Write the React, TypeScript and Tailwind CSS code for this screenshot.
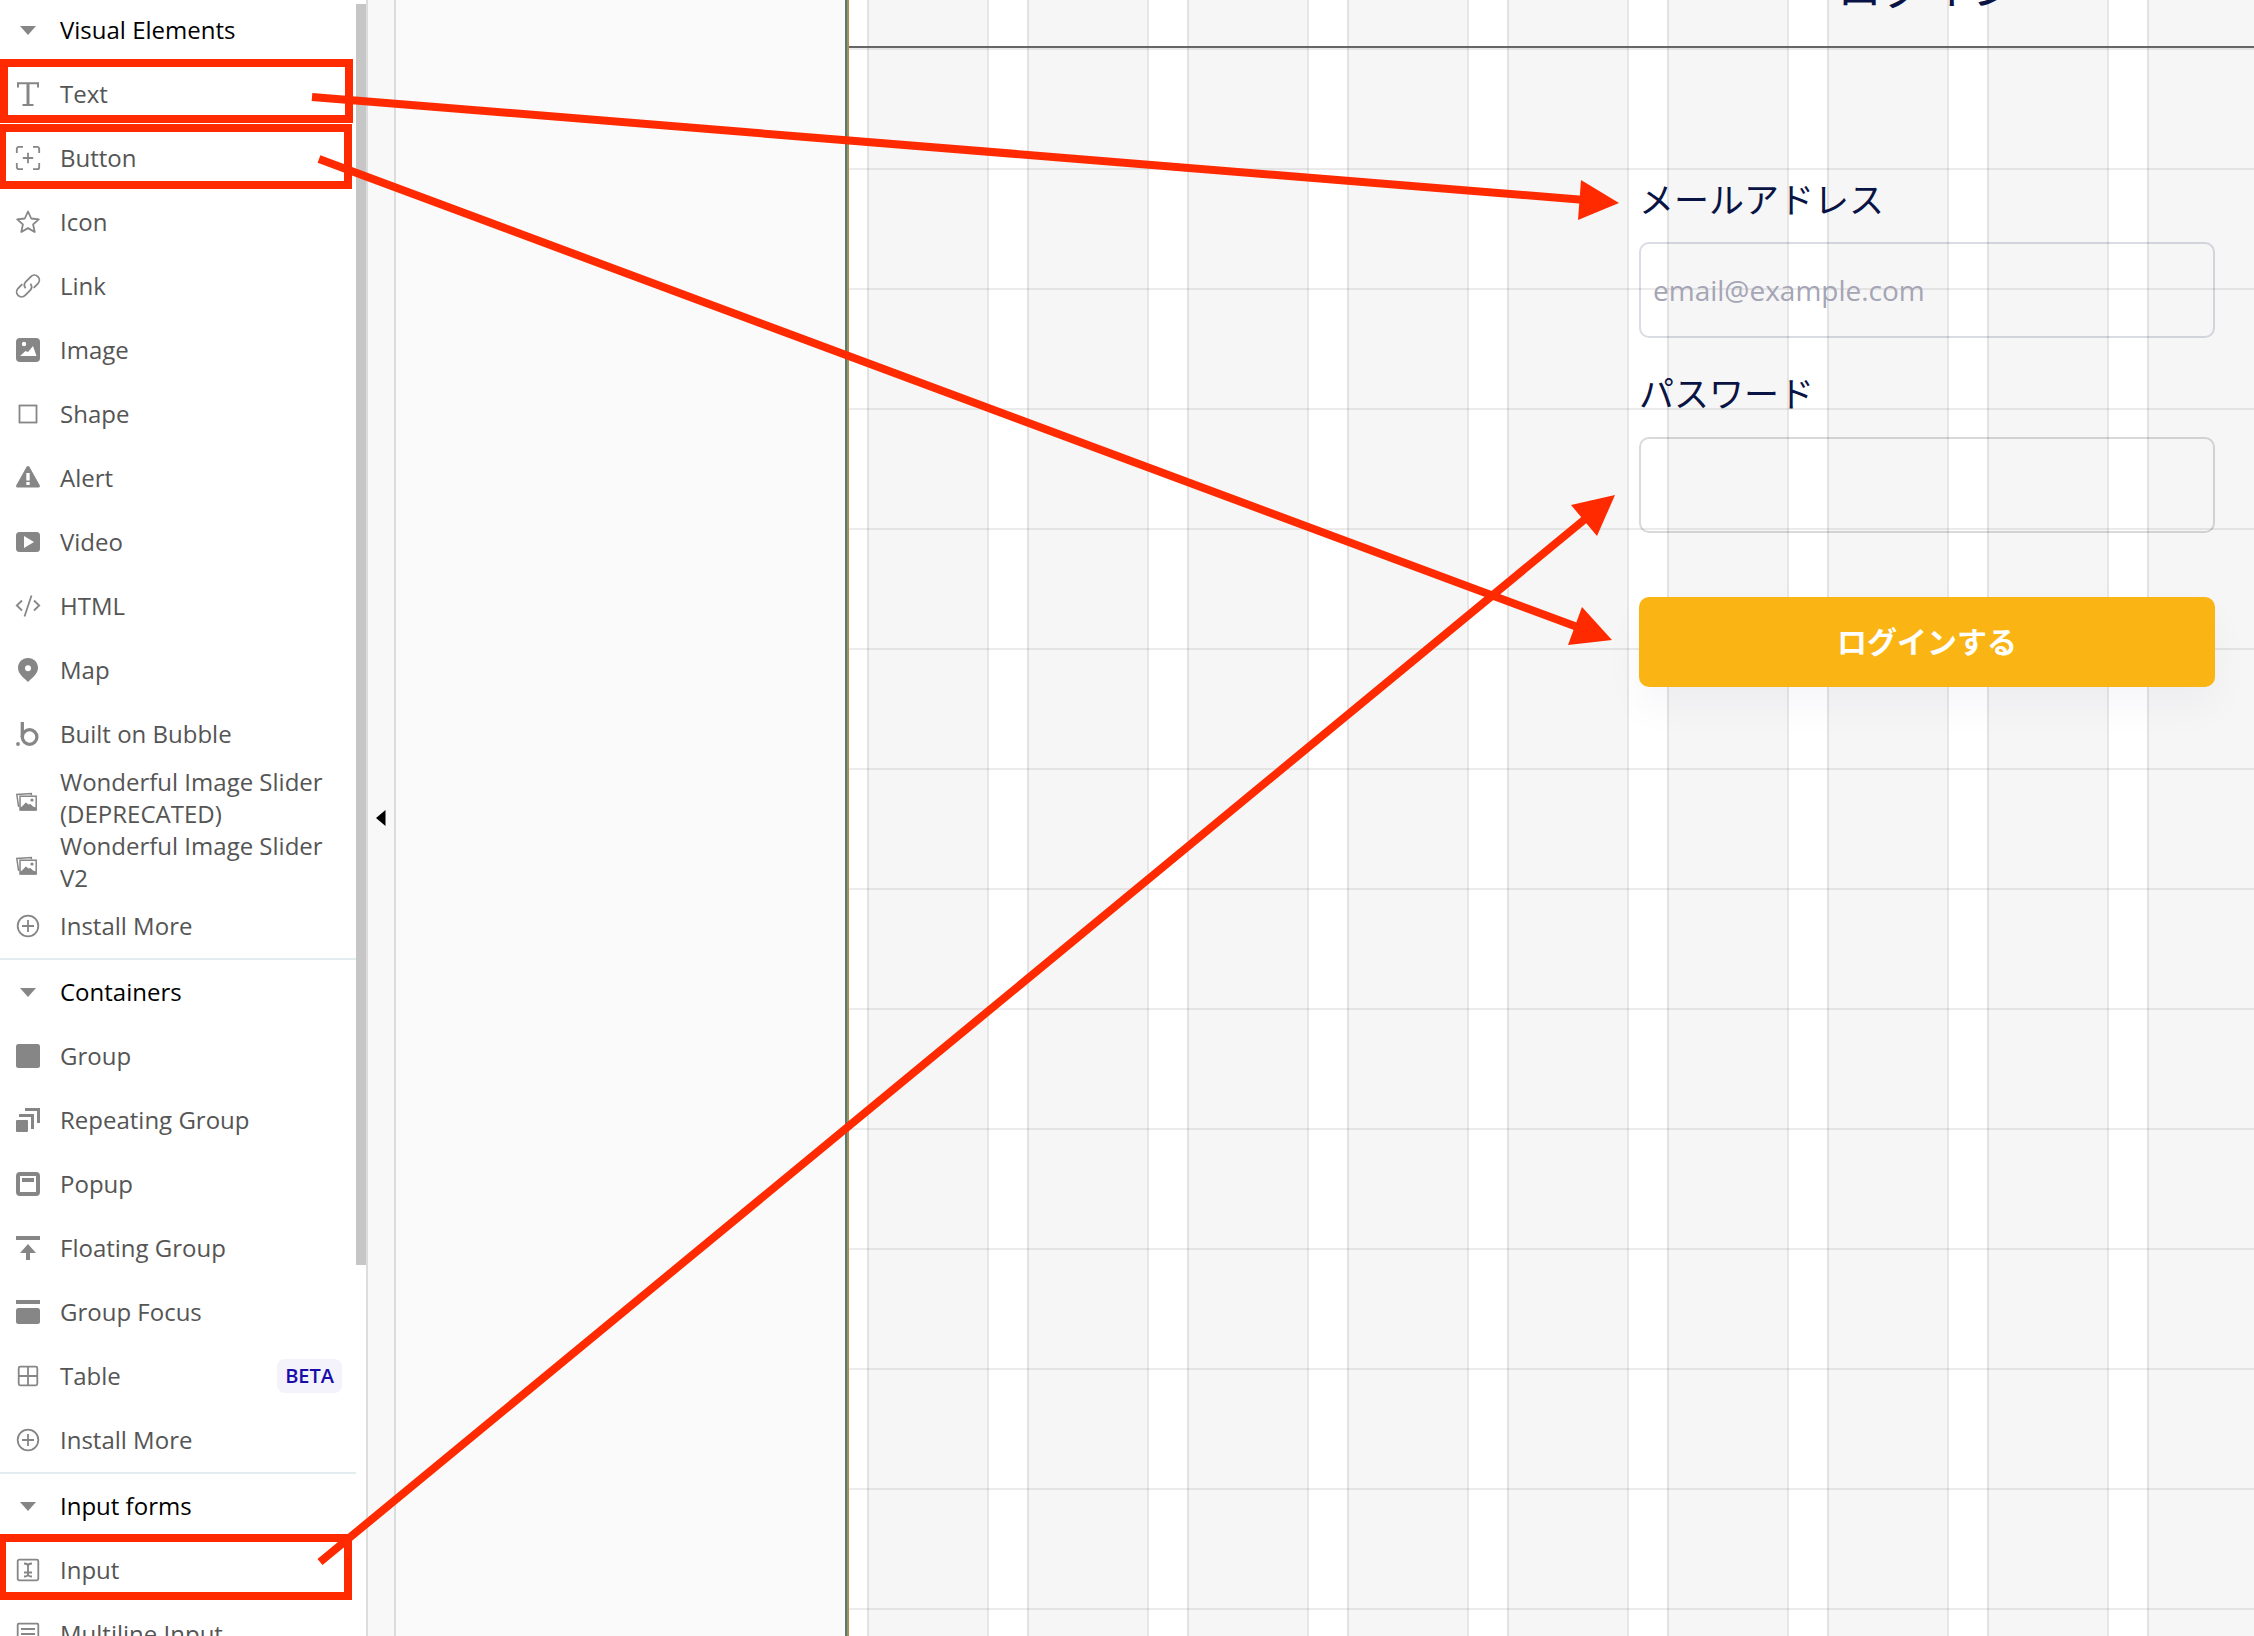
import type { ReactNode } from "react";

interface ElementItem {
  label: string;
  icon: ReactNode;
  badge?: string;
}

interface ElementSection {
  title: string;
  items: ElementItem[];
}

const Icon = ({ children }: { children: ReactNode }) => (
  <svg
    width="24"
    height="24"
    viewBox="0 0 24 24"
    fill="none"
    stroke="currentColor"
    strokeWidth="1.8"
    className="overflow-visible"
    aria-hidden="true"
  >
    {children}
  </svg>
);

// The plugin's artwork hangs low in its box
const SliderIcon = () => (
  <Icon>
    <path d="M3.600 20.500 2.500 20 .8 8.500 15.300 7.600l.2 1.800" strokeWidth="1.500" />
    <rect x="4" y="10.200" width="16.200" height="13.800" strokeWidth="1.500" />
    <path d="M4 24.500v-3l2-1 3.800-4 2.700 2 2-.5 2.500 2.500 3 1v3z" fill="currentColor" stroke="none" />
    <circle cx="16" cy="14" r="1.600" fill="currentColor" stroke="none" />
  </Icon>
);

const InstallIcon = () => (
  <Icon>
    <circle cx="12" cy="12" r="10.300" />
    <path d="M12 6v12M6 12h12" />
  </Icon>
);

const sections: ElementSection[] = [
  {
    title: "Visual Elements",
    items: [
      {
        label: "Text",
        icon: (
          <Icon>
            <path d="M2 5.500V1.200h20v4.300M6.500 23h11" strokeWidth="2" />
            <path d="M12 1v22" strokeWidth="3" />
          </Icon>
        ),
      },
      {
        label: "Button",
        icon: (
          <Icon>
            <path d="M.8 7V2.800a2 2 0 0 1 2-2H7M17 .8h4.200a2 2 0 0 1 2 2V7M23.200 17v4.200a2 2 0 0 1-2 2H17M7 23.200H2.800a2 2 0 0 1-2-2V17M12 6.800v10.400M6.800 12h10.400" />
          </Icon>
        ),
      },
      {
        label: "Icon",
        icon: (
          <Icon>
            <path d="m12 1.500 3.200 7 7.600.8-5.700 5.100 1.600 7.600-6.700-3.900L5.300 22l1.600-7.600-5.700-5.100 7.600-.8z" strokeLinejoin="round" />
          </Icon>
        ),
      },
      {
        label: "Link",
        icon: (
          <Icon>
            <path d="M9.600 14.200a5 5 0 0 1 .3-6.600l5-5a4.900 4.900 0 0 1 7 7l-4.200 4.200" />
            <path d="M14.400 9.800a5 5 0 0 1-.3 6.600l-5 5a4.900 4.900 0 0 1-7-7l4.200-4.200" />
          </Icon>
        ),
      },
      {
        label: "Image",
        icon: (
          <Icon>
            <rect width="24" height="24" rx="4" fill="currentColor" stroke="none" />
            <circle cx="8" cy="6" r="2.200" fill="white" stroke="none" />
            <path d="M4 18 9.500 13l2.500 1 5-6 3.500 10z" fill="white" stroke="none" />
          </Icon>
        ),
      },
      {
        label: "Shape",
        icon: (
          <Icon>
            <rect x="3.500" y="3.500" width="17" height="17" />
          </Icon>
        ),
      },
      {
        label: "Alert",
        icon: (
          <Icon>
            <path d="M10.600.8a1.700 1.700 0 0 1 2.800 0l10.300 18.400c.7 1.200 0 2.300-1.200 2.300h-21c-1.200 0-1.900-1.100-1.200-2.300z" fill="currentColor" stroke="none" />
            <path d="M10.300 7h3.400v7.500h-3.400zM10.300 16h3.400v3h-3.400z" fill="white" stroke="none" />
          </Icon>
        ),
      },
      {
        label: "Video",
        icon: (
          <Icon>
            <rect y="2" width="24" height="20" rx="3.500" fill="currentColor" stroke="none" />
            <path d="m8 6 10 6-10 6z" fill="white" stroke="none" />
          </Icon>
        ),
      },
      {
        label: "HTML",
        icon: (
          <Icon>
            <path d="M6 6.500.8 11.500 6 16.500M18 6.500l5.200 5-5.200 5M15.500 1.500l-7 21" />
          </Icon>
        ),
      },
      {
        label: "Map",
        icon: (
          <Icon>
            <path d="M12 0C6.300 0 2 4.300 2 9.800 2 15 5.500 18 12 24c6.500-6 10-9 10-14.200C22 4.300 17.700 0 12 0z" fill="currentColor" stroke="none" />
            <circle cx="12" cy="10.300" r="3" fill="white" stroke="none" />
          </Icon>
        ),
      },
      {
        label: "Built on Bubble",
        icon: (
          <Icon>
            <circle cx="13.600" cy="15" r="7.300" strokeWidth="3.300" />
            <path d="M6.300 0v15" strokeWidth="3.300" />
            <circle cx="2" cy="22" r="1.900" fill="currentColor" stroke="none" />
          </Icon>
        ),
      },
      { label: "Wonderful Image Slider (DEPRECATED)", icon: <SliderIcon /> },
      { label: "Wonderful Image Slider V2", icon: <SliderIcon /> },
      { label: "Install More", icon: <InstallIcon /> },
    ],
  },
  {
    title: "Containers",
    items: [
      {
        label: "Group",
        icon: (
          <Icon>
            <rect width="24" height="24" rx="2.500" fill="currentColor" stroke="none" />
          </Icon>
        ),
      },
      {
        label: "Repeating Group",
        icon: (
          <Icon>
            <rect y="12" width="12" height="12" rx="1" fill="currentColor" stroke="none" />
            <path d="M3 7.500h13.500V21M9 1.500h13.500V15" strokeWidth="3" />
          </Icon>
        ),
      },
      {
        label: "Popup",
        icon: (
          <Icon>
            <rect x="2" y="2" width="20" height="20" rx="2" strokeWidth="4" />
            <path d="M6 8h12" strokeWidth="4" />
          </Icon>
        ),
      },
      {
        label: "Floating Group",
        icon: (
          <Icon>
            <path d="M0 2h24" strokeWidth="4" />
            <path d="m12 8 8 9h-6v7h-4v-7H4z" fill="currentColor" stroke="none" />
          </Icon>
        ),
      },
      {
        label: "Group Focus",
        icon: (
          <Icon>
            <path d="M0 2h24" strokeWidth="4" />
            <rect y="8" width="24" height="16" rx="2.500" fill="currentColor" stroke="none" />
          </Icon>
        ),
      },
      {
        label: "Table",
        badge: "BETA",
        icon: (
          <Icon>
            <rect x="2.700" y="2.700" width="18.600" height="18.600" rx="1.500" />
            <path d="M12 3v18M3 12h18" />
          </Icon>
        ),
      },
      { label: "Install More", icon: <InstallIcon /> },
    ],
  },
  {
    title: "Input forms",
    items: [
      {
        label: "Input",
        icon: (
          <Icon>
            <rect x="1.700" y="1.700" width="20.600" height="20.600" rx="1.500" />
            <path d="M8 5.500c2.500 0 4 .8 4 2.500v8c0 1.700-1.500 2.500-4 2.500M16 5.500c-2.500 0-4 .8-4 2.500M16 18.500c-2.500 0-4-.8-4-2.500M8 14.500h8" />
          </Icon>
        ),
      },
      {
        label: "Multiline Input",
        icon: (
          <Icon>
            <rect x="1.700" y="1.700" width="20.600" height="20.600" rx="1" />
            <path d="M5 7h14M5 12h14M5 17h14" />
          </Icon>
        ),
      },
    ],
  },
];

const SectionHeader = ({ title }: { title: string }) => (
  <h2>
    <button type="button" className="flex h-16 w-full items-center gap-5 pl-4 text-left text-black">
      <svg width="24" height="24" viewBox="0 0 24 24" className="shrink-0 text-[#868686]" aria-hidden="true">
        <path d="M4 8h16l-8 9z" fill="currentColor" />
      </svg>
      {title}
    </button>
  </h2>
);

const ElementRow = ({ label, icon, badge }: ElementItem) => (
  <li>
    <button type="button" className="flex h-16 w-full items-center gap-5 pr-3.5 pl-4 text-left text-[#555]">
      <span className="shrink-0 text-[#868686]">{icon}</span>
      <span className="flex-1">{label}</span>
      {badge && (
        <span className="rounded-lg bg-[#f4f3fb] px-2 py-1 text-xl leading-[26px] font-semibold text-[#1a0ca8]">{badge}</span>
      )}
    </button>
  </li>
);

const Sidebar = () => (
  <aside className="flex w-[368px] shrink-0 overflow-hidden border-r-2 border-[#dcdcdc] bg-white text-2xl">
    <nav className="-mt-0.5 min-w-0 flex-1">
      {sections.map((section) => (
        <section key={section.title} className="border-b-2 border-[#e3ecf1]">
          <SectionHeader title={section.title} />
          <ul>
            {section.items.map((item) => (
              <ElementRow key={item.label} {...item} />
            ))}
          </ul>
        </section>
      ))}
    </nav>
    <div className="w-2.5 pt-1">
      <div className="h-[1261px] bg-[#c6c6c6]" />
    </div>
  </aside>
);

const LoginForm = () => (
  <form className="flex w-[576px] flex-col text-[#0a1444]">
    <label htmlFor="email" className="text-[35px] leading-[48px]">
      メールアドレス
    </label>
    <input
      id="email"
      type="email"
      placeholder="email@example.com"
      className="mt-[18px] h-24 rounded-[10px] border-2 border-[#0a1444]/15 px-3 text-[28px] placeholder:text-[#a5a5b5]"
    />
    <label htmlFor="password" className="mt-8 text-[35px] leading-[48px]">
      パスワード
    </label>
    <input
      id="password"
      type="password"
      className="mt-[19px] h-24 rounded-[10px] border-2 border-black/15 px-3 text-[28px]"
    />
    <button
      type="button"
      className="mt-16 h-[90px] rounded-[10px] bg-[#fab515] pb-0.5 text-[30px] font-bold text-white shadow-[0_20px_40px_rgba(10,20,100,0.04)]"
    >
      ログインする
    </button>
  </form>
);

const Canvas = () => (
  <main className="flex flex-1 flex-col overflow-hidden border-l-2 border-[#b08d4a] bg-white bg-[linear-gradient(to_bottom,#00000014_2px,transparent_2px),linear-gradient(to_right,#e2e2e2_2px,#f6f6f6_2px,#f6f6f6_120px,#e6e6e6_120px,#e6e6e6_122px,transparent_122px)] bg-[size:120px_120px,160px_120px] bg-[position:0_48px,18px_0]">
    <header className="flex h-12 shrink-0 justify-end border-b-2 border-[#666] pr-[39px]">
      <h1 className="-mt-[42px] w-[576px] text-center text-[45px] leading-[60px] text-[#0a1444]">ログイン</h1>
    </header>
    <div className="flex justify-end pt-32 pr-[39px]">
      <LoginForm />
    </div>
  </main>
);

const Annotations = () => (
  <svg width="2254" height="1636" className="pointer-events-none absolute top-0 left-0" fill="none" stroke="#ff2a00" strokeWidth="8" aria-hidden="true">
    <rect x="4" y="63" width="345" height="56" />
    <rect x="2" y="128" width="346" height="57" />
    <rect x="2" y="1538" width="346" height="58" />
    <path d="M312 97 1585 200M319 159l1261 469M320 1562 1590 515" />
    <g fill="#ff2a00" stroke="none">
      <path d="m1619 203-38-23-3 40z" />
      <path d="m1612 640-30-33-14 38z" />
      <path d="m1615 495-44 10 26 31z" />
    </g>
  </svg>
);

const App = () => (
  <div className="relative flex h-screen overflow-hidden bg-[#fafafa] font-['Open_Sans','Noto_Sans_CJK_JP',sans-serif]">
    <Sidebar />
    <div className="flex w-7 shrink-0 items-center justify-center border-r-2 border-[#dcdcdc] bg-[#f8f8f8]">
      <button type="button" aria-label="Collapse panel">
        <svg width="10" height="16" viewBox="0 0 10 16" aria-hidden="true">
          <path d="M9.500 0v16L0 8z" fill="black" />
        </svg>
      </button>
    </div>
    <div className="w-[451px] shrink-0 border-r-2 border-[#4f7d7c]" />
    <Canvas />
    <Annotations />
  </div>
);

export default App;
